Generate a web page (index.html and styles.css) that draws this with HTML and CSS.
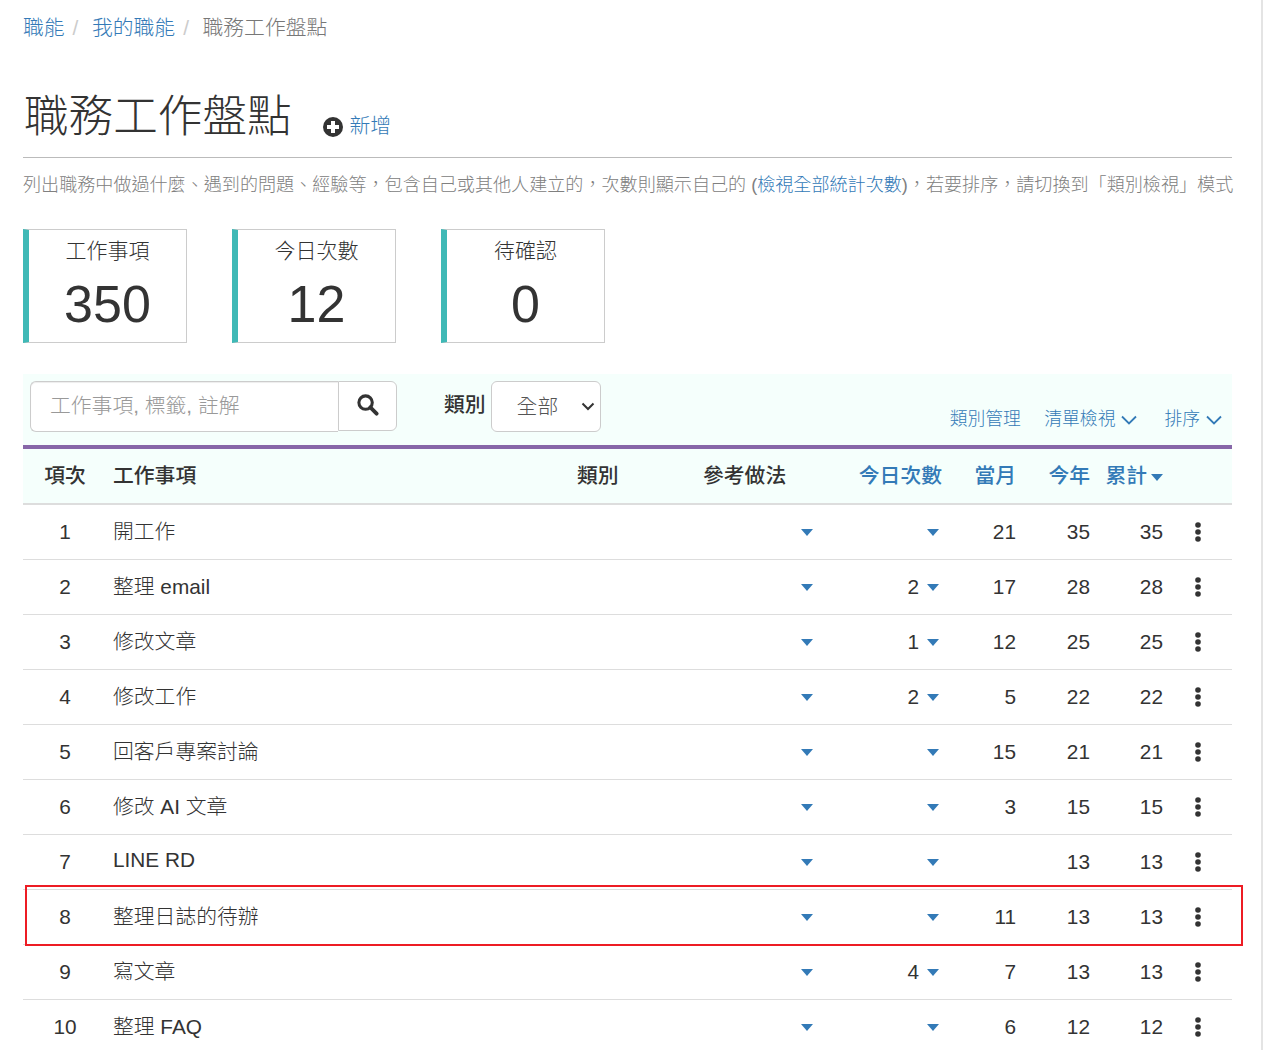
FILE: index.html
```html
<!DOCTYPE html>
<html lang="zh-Hant">
<head>
    <meta charset="UTF-8">
    <meta name="viewport" content="width=device-width, initial-scale=1.0">
    <title>職務工作盤點</title>
    <link rel="stylesheet" href="styles.css">
</head>
<body>
    <div class="page">
        <ol class="breadcrumb">
            <li><a href="#">職能</a></li>
            <li><a href="#">我的職能</a></li>
            <li class="current">職務工作盤點</li>
        </ol>

        <div class="page-header">
            <h1>職務工作盤點</h1>
            <a class="add-link" href="#">
                <svg class="add-icon" viewBox="0 0 20 20"><circle cx="10" cy="10" r="10" fill="#333"/><path d="M8 4h4v4h4v4h-4v4H8v-4H4V8h4z" fill="#fff"/></svg>
                <span>新增</span>
            </a>
        </div>

        <p class="intro">列出職務中做過什麼、遇到的問題、經驗等，包含自己或其他人建立的，次數則顯示自己的 (<a href="#">檢視全部統計次數</a>)，若要排序，請切換到「類別檢視」模式</p>

        <div class="stats">
            <div class="stat"><div class="stat-label">工作事項</div><div class="stat-value">350</div></div>
            <div class="stat"><div class="stat-label">今日次數</div><div class="stat-value">12</div></div>
            <div class="stat"><div class="stat-label">待確認</div><div class="stat-value">0</div></div>
        </div>

        <div class="toolbar">
            <div class="search">
                <input type="text" placeholder="工作事項, 標籤, 註解">
                <button type="button">
                    <svg viewBox="0 0 24 24" width="23" height="23"><circle cx="10" cy="10" r="7" fill="none" stroke="#333" stroke-width="3.2"/><path d="M15 15l6.5 6.5" stroke="#333" stroke-width="4" stroke-linecap="round"/></svg>
                </button>
            </div>
            <label class="filter-label">類別</label>
            <div class="filter">
                <select><option>全部</option></select>
                <svg class="filter-arrow" viewBox="0 0 14 9"><path d="M1.5 1.5L7 7l5.5-5.5" fill="none" stroke="#333" stroke-width="2"/></svg>
            </div>
            <div class="toolbar-links">
                <a href="#">類別管理</a>
                <a href="#">清單檢視<svg class="chevron" viewBox="0 0 16 10"><path d="M1 1.5l7 7 7-7" fill="none" stroke="#337ab7" stroke-width="1.8"/></svg></a>
                <a class="sort-link" href="#">排序<svg class="chevron" viewBox="0 0 16 10"><path d="M1 1.5l7 7 7-7" fill="none" stroke="#337ab7" stroke-width="1.8"/></svg></a>
            </div>
        </div>

        <div class="table-wrap">
            <table class="items">
                <colgroup>
                    <col class="c-no"><col class="c-name"><col class="c-cat"><col class="c-ref">
                    <col class="c-today"><col class="c-month"><col class="c-year"><col class="c-total"><col class="c-more">
                </colgroup>
                <thead>
                    <tr>
                        <th class="no">項次</th>
                        <th>工作事項</th>
                        <th>類別</th>
                        <th>參考做法</th>
                        <th class="num"><a href="#">今日次數</a></th>
                        <th class="num"><a href="#">當月</a></th>
                        <th class="num"><a href="#">今年</a></th>
                        <th class="num"><a href="#">累計<span class="caret"></span></a></th>
                        <th></th>
                    </tr>
                </thead>
                <tbody id="rows"></tbody>
            </table>
            <div class="highlight"></div>
        </div>
    </div>

    <script>
        const items = [
            [1, '開工作', '', 21, 35, 35],
            [2, '整理 email', 2, 17, 28, 28],
            [3, '修改文章', 1, 12, 25, 25],
            [4, '修改工作', 2, 5, 22, 22],
            [5, '回客戶專案討論', '', 15, 21, 21],
            [6, '修改 AI 文章', '', 3, 15, 15],
            [7, 'LINE RD', '', '', 13, 13],
            [8, '整理日誌的待辦', '', 11, 13, 13],
            [9, '寫文章', 4, 7, 13, 13],
            [10, '整理 FAQ', '', 6, 12, 12]
        ];
        const dots = '<svg class="dots" viewBox="0 0 6 20"><circle cx="3" cy="3" r="2.8"/><circle cx="3" cy="10" r="2.8"/><circle cx="3" cy="17" r="2.8"/></svg>';

        document.getElementById('rows').innerHTML = items.map(item => `
            <tr>
                <td class="no">${item[0]}</td>
                <td class="name">${item[1]}</td>
                <td></td>
                <td class="ref"><span class="caret"></span></td>
                <td class="num">${item[2]}<span class="caret"></span></td>
                <td class="num">${item[3]}</td>
                <td class="num">${item[4]}</td>
                <td class="num">${item[5]}</td>
                <td class="more">${dots}</td>
            </tr>`).join('');
    </script>
</body>
</html>
```

FILE: styles.css
```css
* {
    box-sizing: border-box;
}
html, body {
    height: 1050px;
    overflow: hidden;
}
body {
    width: 1263px;
    margin: 0;
    font-family: "Liberation Sans", "Noto Sans CJK TC", sans-serif;
    font-size: 20.8px;
    color: #333;
    background: #fff;
    border-right: 2px solid #e4e4e4;
}
a {
    color: #337ab7;
    text-decoration: none;
}
.page {
    padding: 0 29px 0 23px;
}
.breadcrumb {
    display: flex;
    list-style: none;
    margin: 0;
    padding: 14px 0 0;
    height: 55px;
    line-height: 28px;
    font-weight: 300;
}
.breadcrumb li:not(:last-child)::after {
    content: "/";
    color: #ccc;
    margin: 0 13.6px 0 8px;
}
.breadcrumb .current {
    color: #777;
}
.page-header {
    display: flex;
    align-items: flex-end;
    height: 103px;
    padding-bottom: 10px;
    border-bottom: 1px solid #bbb;
}
.page-header h1 {
    margin: 0 0 0 1px;
    font-size: 44.6px;
    font-weight: 300;
    line-height: 60px;
}
.add-link {
    display: flex;
    align-items: center;
    gap: 7px;
    margin: 0 0 7px 31px;
    font-weight: 300;
    line-height: 28px;
}
.add-icon {
    width: 20px;
    height: 20px;
    margin-top: 2px;
}
.intro {
    margin: 0;
    padding-top: 14px;
    height: 71px;
    font-size: 18.08px;
    line-height: 26px;
    color: #808080;
    white-space: nowrap;
    font-weight: 300;
}
.stats {
    display: flex;
    gap: 45px;
    margin-bottom: 31px;
}
.stat {
    width: 164px;
    height: 114px;
    border: 1px solid #ccc;
    border-left: 6px solid #3fb9b6;
    text-align: center;
}
.stat-label {
    margin-top: 6px;
    font-size: 21px;
    line-height: 30px;
    font-weight: 300;
}
.stat-value {
    font-size: 52px;
    line-height: 64px;
    margin-top: 6px;
}
.toolbar {
    display: flex;
    align-items: flex-start;
    height: 75px;
    padding: 7px 10px 0 7px;
    background: #f5fffc;
    border-bottom: 4px solid #8767a8;
}
.search {
    display: flex;
    width: 367px;
}
.search input {
    width: 309px;
    height: 51px;
    padding: 0 19px 2px;
    font: inherit;
    font-weight: 300;
    color: #555;
    border: 1px solid #ccc;
    border-right: 0;
    border-radius: 6px 0 0 6px;
    background: #fff;
    box-shadow: inset 0 1px 1px rgba(0,0,0,0.075);
}
.search input::placeholder {
    color: #999;
}
.search button {
    display: flex;
    align-items: center;
    justify-content: center;
    width: 59px;
    height: 50px;
    padding: 0 0 4px;
    border: 1px solid #ccc;
    border-radius: 0 6px 6px 0;
    background: #fff;
}
.filter-label {
    margin: 10px 5px 0 47px;
    font-weight: 500;
    line-height: 28px;
}
.filter {
    position: relative;
    width: 110px;
    height: 51px;
}
.filter select {
    appearance: none;
    width: 100%;
    height: 100%;
    padding: 0 0 0 25px;
    font: inherit;
    font-weight: 300;
    color: #555;
    border: 1px solid #ccc;
    border-radius: 6px;
    background: #fff;
}
.filter-arrow {
    position: absolute;
    top: 21px;
    right: 6px;
    width: 14px;
    height: 9px;
    pointer-events: none;
}
.toolbar-links {
    display: flex;
    gap: 23.5px;
    margin: 25px 0 0 auto;
    font-size: 17.8px;
    line-height: 26px;
    font-weight: 300;
}
.sort-link {
    margin-left: 3.5px;
}
.chevron {
    width: 16px;
    height: 10px;
    margin-left: 6px;
}
.table-wrap {
    position: relative;
}
.items {
    width: 100%;
    border-collapse: collapse;
    table-layout: fixed;
}
.c-no { width: 90px; }
.c-name { width: 464px; }
.c-cat { width: 126px; }
.c-ref { width: 134px; }
.c-today { width: 105px; }
.c-month { width: 74px; }
.c-year { width: 74px; }
.c-total { width: 73px; }
.items th {
    height: 55px;
    padding: 0 0 4px;
    text-align: left;
    background: #f5fffc;
    border-bottom: 2px solid #ddd;
    font-weight: 500;
}
.items td {
    height: 55px;
    padding: 1px 0 0;
    border-bottom: 1px solid #ddd;
    font-weight: 300;
}
.items td.name {
    padding: 0 0 3px;
}
.items .no {
    text-align: center;
    padding-right: 6px;
}
.items .num {
    text-align: right;
}
.items .ref {
    text-align: right;
    padding-right: 24px;
}
.items td.num:nth-child(5) .caret {
    margin-left: 8px;
    margin-right: 3px;
}
.caret {
    display: inline-block;
    margin-left: 4px;
    border-top: 7px solid #337ab7;
    border-left: 6.5px solid transparent;
    border-right: 6.5px solid transparent;
    vertical-align: middle;
}
.items td .caret {
    margin-bottom: 2px;
}
.items td.ref, .items td.num:nth-child(5) {
    padding-top: 0;
}
.items td.more {
    text-align: right;
    padding: 0 31px 3px 0;
}
.dots {
    width: 6px;
    height: 20px;
    fill: #333;
    vertical-align: middle;
}
.highlight {
    position: absolute;
    left: 2px;
    top: 436px;
    width: 1218px;
    height: 61px;
    border: 2px solid #ed1c24;
}
```
